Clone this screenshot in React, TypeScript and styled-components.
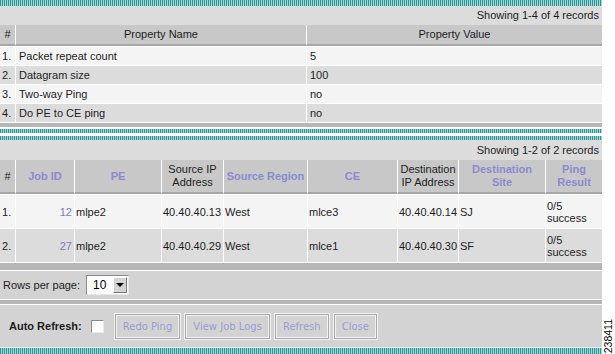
import React from 'react';
import styled, { createGlobalStyle } from 'styled-components';

const GlobalStyle = createGlobalStyle`
  html, body {
    margin: 0;
    padding: 0;
    background: #fff;
  }
  body {
    font-family: "Liberation Sans", Arial, sans-serif;
    font-size: 11px;
    color: #1c1c1c;
  }
`;

const Page = styled.div`
  display: flex;
  width: 615px;
  height: 354px;
  overflow: hidden;
`;

const Main = styled.div`
  width: 602px;
  display: flex;
  flex-direction: column;
`;

const Gutter = styled.div`
  flex: 1;
  display: flex;
  flex-direction: column;
  justify-content: flex-end;
  align-items: center;
  padding-bottom: 1px;
`;

const FigureId = styled.span`
  writing-mode: vertical-rl;
  transform: rotate(180deg);
  font-size: 10.5px;
  line-height: 11px;
  color: #000;
`;

const Stripe = styled.div<{ $h: number; $gap?: number }>`
  flex-shrink: 0;
  height: ${p => p.$h}px;
  margin-top: ${p => p.$gap ?? 0}px;
  background: repeating-linear-gradient(90deg, #2e9494 0 1px, #a2d5d5 1px 2px);
`;

const Caption = styled.div<{ $h: number }>`
  height: ${p => p.$h}px;
  line-height: ${p => p.$h}px;
  background: #dcdcdc;
  text-align: right;
  padding-right: 3px;
`;

const Grid = styled.table<{ $pad: number }>`
  width: 602px;
  table-layout: fixed;
  border-collapse: separate;
  border-spacing: 0;
  font-size: 11px;
  td {
    padding-left: ${p => p.$pad}px;
  }
  td:first-child {
    padding-left: 2px;
  }
`;

const Head = styled.th<{ $link?: boolean; $h: number }>`
  height: ${p => p.$h}px;
  padding: 0 2px;
  background: #c8c8c8;
  border-bottom: 2px solid #a6a6a6;
  border-left: 1px solid #fff;
  font-weight: ${p => (p.$link ? 'bold' : 'normal')};
  color: ${p => (p.$link ? '#8a8ad2' : '#1c1c1c')};
  text-align: center;
  vertical-align: middle;
  line-height: 13px;
  &:first-child {
    border-left: 0;
    padding: 0;
  }
`;

const Row = styled.tr<{ $alt: boolean }>`
  background: ${p => (p.$alt ? '#dcdcdc' : '#f4f4f4')};
`;

const Cell = styled.td<{ $h: number; $right?: boolean; $link?: boolean }>`
  height: ${p => p.$h}px;
  padding-top: 0;
  padding-bottom: 0;
  padding-right: 2px;
  border-top: 1px solid #fff;
  border-left: 1px solid #fff;
  white-space: nowrap;
  text-align: ${p => (p.$right ? 'right' : 'left')};
  color: ${p => (p.$link ? '#7c7cc0' : '#1c1c1c')};
  vertical-align: middle;
  line-height: 12px;
  &:first-child {
    border-left: 0;
  }
`;

const FooterBar = styled.div<{ $h: number }>`
  height: ${p => p.$h}px;
  border-top: 1px solid #fff;
  background: #b6b6b6;
`;

const Pager = styled.div`
  height: 28px;
  margin-top: 1px;
  display: flex;
  align-items: center;
  gap: 6px;
  padding-left: 3px;
  background: #d3d3d3;
`;

const SelectBox = styled.div`
  display: flex;
  height: 20px;
  width: 43px;
  box-sizing: border-box;
  border: 1px solid;
  border-color: #8a8a8a #e8e8e8 #e8e8e8 #8a8a8a;
  background: #fff;
`;

const Select = styled.select`
  appearance: none;
  border: 0;
  outline: 0;
  background: transparent;
  width: 26px;
  padding: 0 0 0 6px;
  font-family: "Liberation Sans", Arial, sans-serif;
  font-size: 12px;
  color: #000;
`;

const ArrowBox = styled.span`
  width: 14px;
  margin: 1px;
  box-sizing: border-box;
  border: 1px solid;
  border-color: #fff #7a7a7a #7a7a7a #fff;
  background: #d4d4d4;
  display: flex;
  align-items: center;
  justify-content: center;
  &::after {
    content: "";
    border-left: 4px solid transparent;
    border-right: 4px solid transparent;
    border-top: 4px solid #000;
  }
`;

const Divider = styled.div`
  height: 4px;
  margin: 1px 0;
  background: #b6b6b6;
`;

const Actions = styled.div`
  height: 42px;
  display: flex;
  align-items: center;
  padding-left: 9px;
  background: #d3d3d3;
`;

const AutoLabel = styled.label`
  display: flex;
  align-items: center;
  gap: 9px;
  font-weight: bold;
  margin-right: 11px;
`;

const Check = styled.input`
  appearance: none;
  margin: 0;
  width: 13px;
  height: 13px;
  box-sizing: border-box;
  border: 1px solid;
  border-color: #8a8a8a #eaeaea #eaeaea #8a8a8a;
  background: #fff;
`;

const Buttons = styled.div`
  display: flex;
  gap: 5px;
`;

const Button = styled.button`
  height: 25px;
  padding: 0 7px;
  box-sizing: border-box;
  border: 1px solid #a9a9a9;
  box-shadow: 0 0 0 1px #f2f2f2, inset 0 0 0 1px #f2f2f2;
  background: #d3d3d3;
  font-family: "DejaVu Sans", Verdana, sans-serif;
  font-size: 10px;
  color: #9c9cd4;
`;

const BottomStripe = styled(Stripe)`
  border-top: 1px solid #e4f2f2;
`;

const properties = [
  ['Packet repeat count', '5'],
  ['Datagram size', '100'],
  ['Two-way Ping', 'no'],
  ['Do PE to CE ping', 'no'],
];

const jobs = [
  { id: 12, pe: 'mlpe2', srcIp: '40.40.40.13', region: 'West', ce: 'mlce3', dstIp: '40.40.40.14', site: 'SJ' },
  { id: 27, pe: 'mlpe2', srcIp: '40.40.40.29', region: 'West', ce: 'mlce1', dstIp: '40.40.40.30', site: 'SF' },
];

const jobCols = [15, 59, 87, 62, 84, 90, 61, 87, 57];

const App = () => {
  return (
    <>
      <GlobalStyle />
      <Page>
        <Main>
          <Stripe $h={6} />
          <Caption $h={19}>Showing 1-4 of 4 records</Caption>
          <Grid $pad={3}>
            <colgroup>
              <col style={{ width: 15 }} />
              <col style={{ width: 291 }} />
              <col style={{ width: 296 }} />
            </colgroup>
            <thead>
              <tr>
                <Head $h={19}>#</Head>
                <Head $h={19}>Property Name</Head>
                <Head $h={19}>Property Value</Head>
              </tr>
            </thead>
            <tbody>
              {properties.map(([name, value], i) => (
                <Row key={name} $alt={i % 2 === 1}>
                  <Cell $h={18}>{i + 1}.</Cell>
                  <Cell $h={18}>{name}</Cell>
                  <Cell $h={18}>{value}</Cell>
                </Row>
              ))}
            </tbody>
          </Grid>
          <FooterBar $h={4} />
          <Stripe $h={4} $gap={2} />
          <Stripe $h={4} $gap={3} />
          <Caption $h={20}>Showing 1-2 of 2 records</Caption>
          <Grid $pad={1}>
            <colgroup>
              {jobCols.map((w, i) => (
                <col key={i} style={{ width: w }} />
              ))}
            </colgroup>
            <thead>
              <tr>
                <Head $h={32}>#</Head>
                <Head $h={32} $link>Job ID</Head>
                <Head $h={32} $link>PE</Head>
                <Head $h={32}>Source IP<br />Address</Head>
                <Head $h={32} $link>Source Region</Head>
                <Head $h={32} $link>CE</Head>
                <Head $h={32}>Destination<br />IP Address</Head>
                <Head $h={32} $link>Destination<br />Site</Head>
                <Head $h={32} $link>Ping<br />Result</Head>
              </tr>
            </thead>
            <tbody>
              {jobs.map((j, i) => (
                <Row key={j.id} $alt={i % 2 === 1}>
                  <Cell $h={33}>{i + 1}.</Cell>
                  <Cell $h={33} $right $link>{j.id}</Cell>
                  <Cell $h={33}>{j.pe}</Cell>
                  <Cell $h={33}>{j.srcIp}</Cell>
                  <Cell $h={33}>{j.region}</Cell>
                  <Cell $h={33}>{j.ce}</Cell>
                  <Cell $h={33}>{j.dstIp}</Cell>
                  <Cell $h={33}>{j.site}</Cell>
                  <Cell $h={33}>0/5<br />success</Cell>
                </Row>
              ))}
            </tbody>
          </Grid>
          <FooterBar $h={7} />
          <Pager>
            <span>Rows per page:</span>
            <SelectBox>
              <Select defaultValue="10">
                <option value="10">10</option>
                <option value="20">20</option>
                <option value="50">50</option>
              </Select>
              <ArrowBox />
            </SelectBox>
          </Pager>
          <Divider />
          <Actions>
            <AutoLabel>
              Auto Refresh:
              <Check type="checkbox" />
            </AutoLabel>
            <Buttons>
              <Button>Redo Ping</Button>
              <Button>View Job Logs</Button>
              <Button>Refresh</Button>
              <Button>Close</Button>
            </Buttons>
          </Actions>
          <BottomStripe $h={6} />
        </Main>
        <Gutter>
          <FigureId>238411</FigureId>
        </Gutter>
      </Page>
    </>
  );
};

export default App;
